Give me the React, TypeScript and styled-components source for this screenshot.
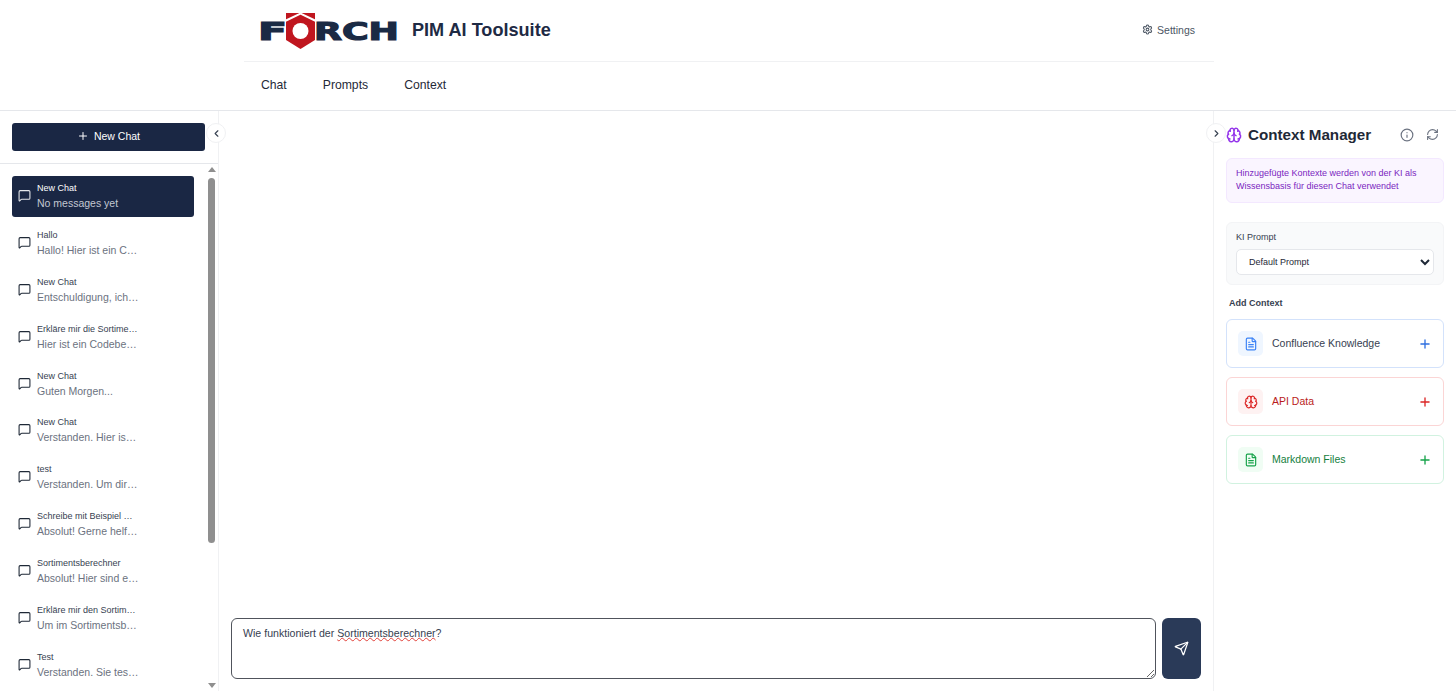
import React from "react";
import styled, { createGlobalStyle } from "styled-components";
import { Brain, ChevronLeft, ChevronRight, FileText, Info, MessageSquare, Plus, RefreshCw, Send, Settings } from "lucide-react";

const Global = createGlobalStyle`
  html, body { margin: 0; padding: 0; height: 100%; background: #fff; overflow: hidden; }
  body { font-family: "Liberation Sans", Arial, sans-serif; color: #1f2937; }
  * { box-sizing: border-box; }
`;

const Page = styled.div`
  height: 691px;
  display: flex;
  flex-direction: column;
`;
const Header = styled.header`
  height: 111px;
  flex: none;
  border-bottom: 1px solid #e5e7eb;
  padding-left: 244px;
`;
const HeaderInner = styled.div`
  width: 970px;
`;
const TopRow = styled.div`
  height: 62px;
  border-bottom: 1px solid #f0f1f3;
  display: flex;
  align-items: center;
  padding: 0 19px 0 14px;
`;
const Title = styled.h1`
  margin: 0 0 0 13px;
  font-size: 18.1px;
  font-weight: 700;
  color: #1e2a44;
`;
const SettingsLink = styled.a`
  margin-left: auto;
  margin-bottom: 2px;
  display: flex;
  align-items: center;
  gap: 4px;
  font-size: 10.5px;
  color: #4b5563;
`;
const Nav = styled.nav`
  height: 47px;
  display: flex;
  align-items: center;
  gap: 36px;
  padding: 0 0 1px 17px;
`;
const NavItem = styled.a`
  font-size: 12.2px;
  color: #1f2937;
`;
const Body = styled.div`
  flex: 1;
  min-height: 0;
  display: flex;
`;
const Sidebar = styled.aside`
  position: relative;
  width: 219px;
  flex: none;
  border-right: 1px solid #f0f1f3;
  display: flex;
  flex-direction: column;
`;
const SideTop = styled.div`
  height: 53px;
  flex: none;
  padding: 12px 12px 0;
  border-bottom: 1px solid #e5e7eb;
`;
const NewChat = styled.button`
  width: 193px;
  height: 28px;
  border: 0;
  border-radius: 3px;
  background: #1a2744;
  color: #fff;
  font: 10.5px "Liberation Sans", Arial, sans-serif;
  display: flex;
  align-items: center;
  justify-content: center;
  gap: 5px;
  padding: 0 0 2px;
`;
const Collapse = styled.button<{ $side: "left" | "right" }>`
  position: absolute;
  top: 12px;
  ${(p) => (p.$side === "left" ? "right: -8px;" : "left: -8px;")}
  width: 20px;
  height: 20px;
  padding: 0;
  border-radius: 50%;
  border: 1px solid #f0f1f3;
  background: #fff;
  color: #374151;
  display: flex;
  align-items: center;
  justify-content: center;
  z-index: 2;
`;
const List = styled.div`
  flex: 1;
  min-height: 0;
  overflow: hidden;
  padding: 12px 12px 0;
  display: flex;
  flex-direction: column;
  gap: 6px;
`;
const ScrollRail = styled.div`
  position: absolute;
  top: 56px;
  bottom: 3px;
  right: 3px;
  width: 7px;
  display: flex;
  flex-direction: column;
  align-items: center;
`;
const ScrollArrow = styled.span<{ $down?: boolean }>`
  width: 0;
  height: 0;
  border-left: 4px solid transparent;
  border-right: 4px solid transparent;
  ${(p) => (p.$down ? "border-top: 5px solid #8f8f8f; margin-top: auto;" : "border-bottom: 5px solid #8f8f8f;")}
`;
const ScrollThumb = styled.span`
  width: 7px;
  height: 365px;
  margin-top: 6px;
  border-radius: 4px;
  background: #8f8f8f;
`;
const ChatRow = styled.div<{ $active?: boolean }>`
  flex: none;
  width: 182px;
  height: 40.9px;
  border-radius: 3px;
  padding: 0 0 0 6px;
  display: flex;
  align-items: center;
  gap: 6px;
  background: ${(p) => (p.$active ? "#1a2744" : "transparent")};
  color: ${(p) => (p.$active ? "#e5e7eb" : "#1f2937")};
`;
const ChatGlyph = styled.span`
  display: flex;
  flex: none;
  margin-bottom: 2px;
`;
const ChatText = styled.div`
  width: 105px;
  display: flex;
  flex-direction: column;
  gap: 3px;
`;
const ChatTitle = styled.div<{ $active?: boolean }>`
  font-size: 9px;
  line-height: 11px;
  white-space: nowrap;
  color: ${(p) => (p.$active ? "#fff" : "#374151")};
`;
const ChatSub = styled.div<{ $active?: boolean }>`
  font-size: 10.5px;
  line-height: 13px;
  white-space: nowrap;
  color: ${(p) => (p.$active ? "#c3c8d2" : "#6b7280")};
`;
const Main = styled.main`
  flex: 1;
  min-width: 0;
  display: flex;
  align-items: flex-end;
  gap: 6px;
  padding: 0 12px 12px;
`;
const Input = styled.div`
  flex: 1;
  height: 61px;
  border: 1px solid #50545c;
  border-radius: 6px;
  padding: 8px 11px;
  font-size: 10.6px;
  line-height: 13px;
  color: #374151;
  resize: vertical;
  overflow: auto;
`;
const Spell = styled.span`
  text-decoration: underline wavy #e0413a 1px;
  text-underline-offset: 0px;
`;
const SendButton = styled.button`
  width: 39px;
  height: 61px;
  flex: none;
  border: 0;
  border-radius: 6px;
  background: #2a3a58;
  color: #fff;
  display: flex;
  align-items: center;
  justify-content: center;
`;
const Panel = styled.aside`
  position: relative;
  width: 243px;
  flex: none;
  border-left: 1px solid #f0f1f3;
  padding: 12px 12px 0;
`;
const PanelHead = styled.div`
  height: 23px;
  display: flex;
  align-items: center;
  color: #9333ea;
`;
const PanelTitle = styled.h2`
  margin: 0 0 0 6px;
  font-size: 15.2px;
  font-weight: 700;
  color: #1f2937;
`;
const HeadIcon = styled.span<{ $first?: boolean }>`
  display: flex;
  color: #6b7280;
  margin-left: ${(p) => (p.$first ? "auto" : "12px")};
  margin-right: ${(p) => (p.$first ? "0" : "5px")};
`;
const Notice = styled.div`
  margin-top: 12px;
  height: 45px;
  border: 1px solid #f3e8ff;
  border-radius: 6px;
  background: #faf5ff;
  padding: 8px 9px;
  font-size: 9px;
  line-height: 13px;
  color: #7a1fc0;
`;
const PromptBox = styled.div`
  margin-top: 19px;
  height: 63px;
  border: 1px solid #f3f4f6;
  border-radius: 6px;
  background: #f9fafb;
  padding: 9px;
`;
const PromptLabel = styled.label`
  display: block;
  font-size: 9px;
  line-height: 11px;
  color: #374151;
  margin-bottom: 6px;
`;
const Select = styled.select`
  width: 198px;
  height: 26px;
  border: 1px solid #e5e7eb;
  border-radius: 5px;
  background: #fff;
  padding: 0 8px;
  font: 9px "Liberation Sans", Arial, sans-serif;
  color: #1f2937;
`;
const SectionLabel = styled.div`
  margin: 12px 0 10px 3px;
  font-size: 9px;
  line-height: 12px;
  font-weight: 700;
  color: #374151;
`;
const Cards = styled.div`
  display: flex;
  flex-direction: column;
  gap: 9px;
`;
const Card = styled.div<{ $border: string; $text: string }>`
  height: 49px;
  border: 1px solid ${(p) => p.$border};
  border-radius: 6px;
  padding: 0 11px;
  display: flex;
  align-items: center;
  color: ${(p) => p.$text};
  font-size: 10.5px;
`;
const CardLabel = styled.span`
  margin-bottom: 2px;
`;
const CardIcon = styled.span<{ $bg: string; $color: string }>`
  width: 25px;
  height: 25px;
  border-radius: 5px;
  background: ${(p) => p.$bg};
  color: ${(p) => p.$color};
  display: flex;
  align-items: center;
  justify-content: center;
  margin-right: 9px;
`;
const CardPlus = styled.span<{ $color: string }>`
  margin-left: auto;
  display: flex;
  color: ${(p) => p.$color};
`;

const Logo = () => (
  <svg width="141" height="38" viewBox="-3 0 141 38" aria-label="FÖRCH logo">
    <g fill="#1a2a44" stroke="#1a2a44" strokeWidth="1.2" fontFamily="DejaVu Sans, sans-serif" fontWeight="700" fontSize="25">
      <text x="-3" y="27.5" textLength="29" lengthAdjust="spacingAndGlyphs">F</text>
      <text x="53" y="27.5" textLength="85" lengthAdjust="spacingAndGlyphs">RCH</text>
    </g>
    <polygon points="25,1 54,1 54,28 39.5,37 25,28" fill="#c0161f" />
    <polyline points="24,9 39.5,1.5 55,9" fill="none" stroke="#fff" strokeWidth="2" />
    <circle cx="39.5" cy="19" r="8" fill="#fff" />
  </svg>
);

const chats = [
  ["New Chat", "No messages yet"],
  ["Hallo", "Hallo! Hier ist ein C…"],
  ["New Chat", "Entschuldigung, ich…"],
  ["Erkläre mir die Sortime…", "Hier ist ein Codebe…"],
  ["New Chat", "Guten Morgen..."],
  ["New Chat", "Verstanden. Hier is…"],
  ["test", "Verstanden. Um dir…"],
  ["Schreibe mit Beispiel …", "Absolut! Gerne helf…"],
  ["Sortimentsberechner", "Absolut! Hier sind e…"],
  ["Erkläre mir den Sortim…", "Um im Sortimentsb…"],
  ["Test", "Verstanden. Sie tes…"],
];

export default function App() {
  return (
    <Page>
      <Global />
      <Header>
        <HeaderInner>
          <TopRow>
            <Logo />
            <Title>PIM AI Toolsuite</Title>
            <SettingsLink>
              <Settings size={11} strokeWidth={2.2} />
              Settings
            </SettingsLink>
          </TopRow>
          <Nav>
            <NavItem>Chat</NavItem>
            <NavItem>Prompts</NavItem>
            <NavItem>Context</NavItem>
          </Nav>
        </HeaderInner>
      </Header>
      <Body>
        <Sidebar>
          <SideTop>
            <NewChat>
              <Plus size={12} />
              New Chat
            </NewChat>
          </SideTop>
          <Collapse $side="left">
            <ChevronLeft size={11} strokeWidth={2.5} />
          </Collapse>
          <List>
            {chats.map(([t, s], i) => (
              <ChatRow key={i} $active={i === 0}>
                <ChatGlyph>
                  <MessageSquare size={13} strokeWidth={2} />
                </ChatGlyph>
                <ChatText>
                  <ChatTitle $active={i === 0}>{t}</ChatTitle>
                  <ChatSub $active={i === 0}>{s}</ChatSub>
                </ChatText>
              </ChatRow>
            ))}
          </List>
          <ScrollRail>
            <ScrollArrow />
            <ScrollThumb />
            <ScrollArrow $down />
          </ScrollRail>
        </Sidebar>
        <Main>
          <Input>
            Wie funktioniert der <Spell>Sortimentsberechner</Spell>?
          </Input>
          <SendButton>
            <Send size={15} />
          </SendButton>
        </Main>
        <Panel>
          <Collapse $side="right">
            <ChevronRight size={11} strokeWidth={2.5} />
          </Collapse>
          <PanelHead>
            <Brain size={16} strokeWidth={2.2} />
            <PanelTitle>Context Manager</PanelTitle>
            <HeadIcon $first>
              <Info size={14} />
            </HeadIcon>
            <HeadIcon>
              <RefreshCw size={13} />
            </HeadIcon>
          </PanelHead>
          <Notice>
            Hinzugefügte Kontexte werden von der KI als
            <br />
            Wissensbasis für diesen Chat verwendet
          </Notice>
          <PromptBox>
            <PromptLabel>KI Prompt</PromptLabel>
            <Select defaultValue="Default Prompt">
              <option>Default Prompt</option>
            </Select>
          </PromptBox>
          <SectionLabel>Add Context</SectionLabel>
          <Cards>
            <Card $border="#d3e2fb" $text="#374151">
              <CardIcon $bg="#eff6ff" $color="#3b82f6">
                <FileText size={14} />
              </CardIcon>
              <CardLabel>Confluence Knowledge</CardLabel>
              <CardPlus $color="#2f6fe0">
                <Plus size={14} strokeWidth={2.3} />
              </CardPlus>
            </Card>
            <Card $border="#fbd5d5" $text="#b91c1c">
              <CardIcon $bg="#fef2f2" $color="#dc2626">
                <Brain size={14} />
              </CardIcon>
              <CardLabel>API Data</CardLabel>
              <CardPlus $color="#dc2626">
                <Plus size={14} strokeWidth={2.3} />
              </CardPlus>
            </Card>
            <Card $border="#d1f2e0" $text="#15803d">
              <CardIcon $bg="#f0fdf4" $color="#16a34a">
                <FileText size={14} />
              </CardIcon>
              <CardLabel>Markdown Files</CardLabel>
              <CardPlus $color="#16a34a">
                <Plus size={14} strokeWidth={2.3} />
              </CardPlus>
            </Card>
          </Cards>
        </Panel>
      </Body>
    </Page>
  );
}
